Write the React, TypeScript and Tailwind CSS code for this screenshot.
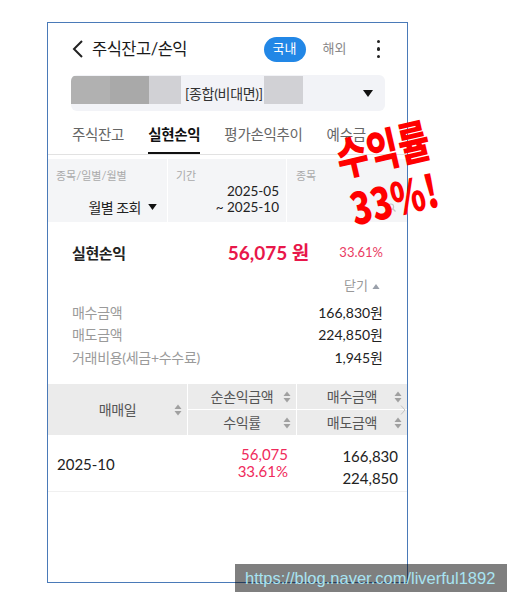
import React from "react";

const Sort = () => (
  <svg width="8" height="12" viewBox="0 0 8 12" className="absolute right-[5px] top-1/2 -translate-y-1/2">
    <path d="M4 0.5L7.5 5H0.5Z" fill="#a0a0a0" />
    <path d="M4 11.5L7.5 7H0.5Z" fill="#a0a0a0" />
  </svg>
);

const Caret = ({ up = false, color = "#111", w = 10, h = 7 }: { up?: boolean; color?: string; w?: number; h?: number }) => (
  <svg width={w} height={h} viewBox="0 0 10 7">
    {up ? <path d="M5 0L10 7H0Z" fill={color} /> : <path d="M0 0H10L5 7Z" fill={color} />}
  </svg>
);

export default function App() {
  return (
    <div className="relative w-[517px] h-[602px] bg-white pt-[22px] pl-[47px] font-[Lato,'Noto_Sans_CJK_KR',sans-serif] text-[#222]">
      {/* phone capture */}
      <div className="w-[361px] h-[561px] border border-[#4a7ab8] overflow-hidden bg-white">
        {/* header */}
        <div className="h-[52px] flex items-center pl-[24px]">
          <svg width="12" height="18" viewBox="0 0 12 18">
            <polyline points="10,1 2,9 10,17" fill="none" stroke="#222" strokeWidth="2" />
          </svg>
          <span className="ml-[8px] text-[16.5px] tracking-[-0.5px] text-[#1a1a1a]">주식잔고/손익</span>
          <span className="ml-auto w-[42px] h-[25px] rounded-full bg-[#2287e6] text-white text-[13px] flex items-center justify-center">국내</span>
          <span className="ml-[17px] text-[13px] text-[#888]">해외</span>
          <div className="ml-[30px] mr-[27px] flex flex-col gap-[4px]">
            <span className="w-[3.5px] h-[3.5px] rounded-full bg-[#222]" />
            <span className="w-[3.5px] h-[3.5px] rounded-full bg-[#222]" />
            <span className="w-[3.5px] h-[3.5px] rounded-full bg-[#222]" />
          </div>
        </div>

        {/* account select */}
        <div className="ml-[23px] w-[314px] h-[36px] rounded-[6px] bg-[#f2f3f7] flex items-center overflow-hidden">
          <div className="self-start mt-[1px] flex h-[28px]">
            <span className="w-[39px] bg-[#b1b1b1]" />
            <span className="w-[39px] bg-[#a9a9a9]" />
            <span className="w-[32px] bg-[#d1d1d5]" />
          </div>
          <span className="ml-[4px] text-[14px] tracking-[-0.3px] text-[#333]">[종합(비대면)]</span>
          <span className="self-start mt-[1px] ml-[1px] w-[39px] h-[28px] bg-[#d1d1d5]" />
          <span className="ml-auto mr-[12px]">
            <Caret />
          </span>
        </div>

        {/* tabs */}
        <div className="h-[44px] flex pl-[24px] gap-[24px] border-b border-[#e2e2e2] text-[14.5px] tracking-[-0.3px]">
          <div className="pt-[13px] text-[#666]">주식잔고</div>
          <div className="pt-[13px] h-full border-b-2 border-[#111] font-bold text-[#111]">실현손익</div>
          <div className="pt-[13px] text-[#666]">평가손익추이</div>
          <div className="pt-[13px] text-[#666]">예수금</div>
        </div>

        {/* filters */}
        <div className="mt-[4px] h-[63px] grid grid-cols-[119px_118px_1fr] gap-px bg-white">
          <div className="bg-[#f4f5f7] pt-[10px] pl-[8px] pr-[10px] flex flex-col">
            <span className="h-[14px] text-[11px] leading-[14px] text-[#aaa]">종목/일별/월별</span>
            <span className="mt-[14px] h-[20px] flex items-center justify-end gap-[7px] text-[14px] tracking-[-0.5px]">
              월별 조회 <Caret w={9} h={6} />
            </span>
          </div>
          <div className="bg-[#f4f5f7] pt-[10px] pl-[8px] pr-[7px] flex flex-col">
            <span className="h-[14px] text-[11px] leading-[14px] text-[#aaa]">기간</span>
            <span className="text-right text-[13.5px] leading-[16px]">2025-05</span>
            <span className="text-right text-[13.5px] leading-[16px]">~ 2025-10</span>
          </div>
          <div className="bg-[#f4f5f7] pt-[10px] pl-[9px] pr-[11px] flex flex-col">
            <span className="h-[14px] text-[11px] leading-[14px] text-[#aaa]">종목</span>
            <span className="mt-[20px] self-end">
              <svg width="9" height="9" viewBox="0 0 9 9">
                <circle cx="3.8" cy="3.8" r="2.8" fill="none" stroke="#c4c4c4" strokeWidth="1.2" />
                <line x1="6" y1="6" x2="8.5" y2="8.5" stroke="#c4c4c4" strokeWidth="1.2" />
              </svg>
            </span>
          </div>
        </div>

        {/* summary */}
        <div className="px-[24px] pt-[19px]">
          <div className="h-[24px] flex items-center">
            <span className="text-[15px] font-bold tracking-[-0.4px]">실현손익</span>
            <span className="ml-auto text-[19px] font-bold text-[#e8174a]">56,075 원</span>
            <span className="ml-[30px] text-[13px] text-[#ea3b63]">33.61%</span>
          </div>
          <div className="mt-[12px] h-[18px] flex items-center justify-end gap-[4px] pr-[3px] text-[13px] text-[#999]">
            닫기 <Caret up color="#9aa0aa" w={8} h={5} />
          </div>
          <div className="mt-[6px] text-[14px]">
            <div className="h-[22.5px] flex items-center justify-between">
              <span className="text-[#9a9a9a] tracking-[-0.3px]">매수금액</span>
              <span>166,830원</span>
            </div>
            <div className="h-[22.5px] flex items-center justify-between">
              <span className="text-[#9a9a9a] tracking-[-0.3px]">매도금액</span>
              <span>224,850원</span>
            </div>
            <div className="h-[22.5px] flex items-center justify-between">
              <span className="text-[#9a9a9a] tracking-[-0.3px]">거래비용(세금+수수료)</span>
              <span>1,945원</span>
            </div>
          </div>
        </div>

        {/* table */}
        <div className="mt-[15.5px]">
          <div className="h-[51px] grid grid-cols-[139px_108px_1fr] gap-px bg-white text-[14px] text-[#555] tracking-[-0.3px]">
            <div className="relative bg-[#ebebeb] flex items-center justify-center">
              매매일
              <Sort />
            </div>
            <div className="flex flex-col gap-px">
              <div className="relative flex-1 bg-[#ebebeb] flex items-center justify-center">
                순손익금액
                <Sort />
              </div>
              <div className="relative flex-1 bg-[#ebebeb] flex items-center justify-center">
                수익률
                <Sort />
              </div>
            </div>
            <div className="relative flex flex-col gap-px">
              <div className="relative flex-1 bg-[#ebebeb] flex items-center justify-center">
                매수금액
                <Sort />
              </div>
              <div className="relative flex-1 bg-[#ebebeb] flex items-center justify-center">
                매도금액
                <Sort />
              </div>
              <svg width="6" height="10" viewBox="0 0 6 10" className="absolute right-[1px] top-[21px]">
                <polyline points="1,0.5 5,5 1,9.5" fill="none" stroke="#c2c2c2" strokeWidth="1" />
              </svg>
            </div>
          </div>
          <div className="h-[57px] grid grid-cols-[139px_108px_1fr] gap-px border-b border-[#f0f0f0] text-[15px]">
            <div className="flex items-center pl-[9px] pt-[2px]">2025-10</div>
            <div className="flex flex-col items-end pr-[8px] pt-[11px] leading-[17px] text-[#ef2a5b]">
              <span>56,075</span>
              <span>33.61%</span>
            </div>
            <div className="flex flex-col items-end pr-[9px] pt-[10px] leading-[22px]">
              <span>166,830</span>
              <span>224,850</span>
            </div>
          </div>
        </div>
      </div>

      {/* red annotation */}
      <div className="absolute left-[318px] top-[112px] w-[140px] h-[120px] flex flex-col items-center justify-center rotate-[-13deg] scale-x-[0.76] text-[#ff0000] font-black leading-[51px] text-[45px] font-['Noto_Sans_CJK_KR',sans-serif]">
        <span>수익률</span>
        <span>33%!</span>
      </div>

      {/* watermark */}
      <div className="absolute left-[235px] top-[564px] w-[272px] h-[28px] bg-black/50 flex items-center pl-[10px] text-[16.5px] text-[#a8e4f2] font-['Liberation_Sans',sans-serif]">
        https://blog.naver.com/liverful1892
      </div>
    </div>
  );
}
